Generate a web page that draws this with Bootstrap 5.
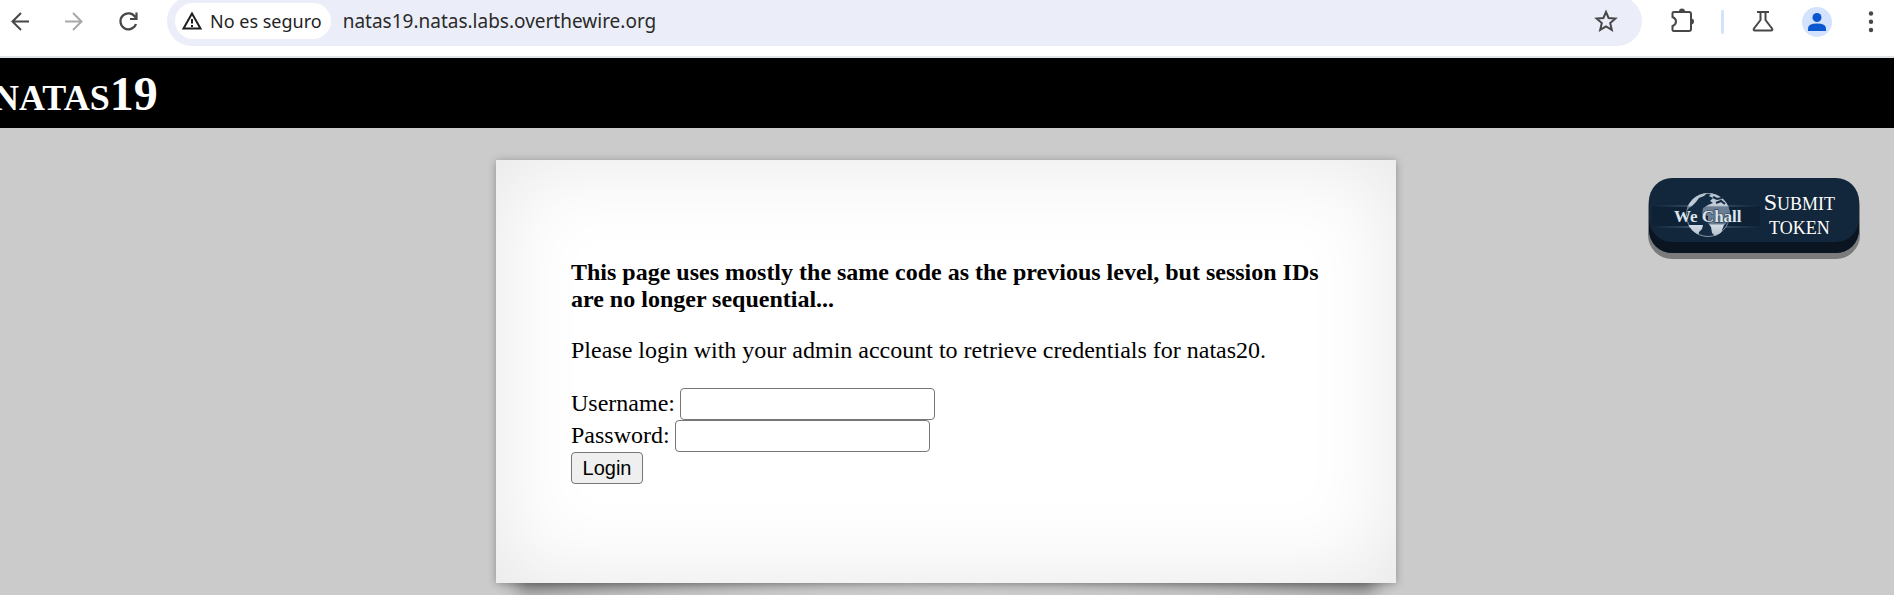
<!DOCTYPE html>
<html lang="es">
<head>
<meta charset="utf-8">
<meta name="viewport" content="width=device-width, initial-scale=1">
<title>natas19</title>
<link href="https://cdn.jsdelivr.net/npm/bootstrap@5.3.0/dist/css/bootstrap.min.css" rel="stylesheet">
<style>
body { background: #cbcbcb; color: #000; font-family: "Liberation Serif", "Times New Roman", serif; font-size: 24px; line-height: 27px; }
.toolbar { height: 58px; padding: 0 11px 12px 8px; border-bottom: 2px solid #dfe3e6; color: #1f1f1f; line-height: 24px; }
.tool { width: 24px; height: 30px; padding: 0; border: 0; background: none; color: #474747; }
.tool svg, .site-chip svg { display: block; }
.nav-tools { width: 159px; gap: 30px; }
.browser-tools { gap: 27px; }
.omnibox { height: 50px; margin-top: -2px; padding: 0 24px 0 8px; border-radius: 25px; background: #ebeef8; }
.site-chip { height: 36px; padding: 0 9px 0 6px; gap: 7px; border: 0; border-radius: 18px; background: #fff; color: #1f1f1f; font-family: "Noto Sans", sans-serif; font-size: 18px; }
.address { margin-left: 12px; padding: 0; border: 0; outline: 0; min-width: 0; background: none; color: #2a2a2a; font-family: "Noto Sans", sans-serif; font-size: 19px; }
.divider { width: 3px; height: 24px; background: #d3e3fd; border-radius: 1px; }
.puzzle { width: 28px; }
.avatar { width: 30px; border-radius: 50%; background: #d3e3fd; color: #0b57d0; }
.level-bar { height: 70px; background: #000; overflow: hidden; }
.level-bar h1 { margin: 0 0 0 -7px; color: #fff; font-size: 48px; line-height: 70px; font-weight: 700; font-variant: small-caps; }
.level-bar span { font-size: 51px; }
.stage { display: grid; grid-template-columns: 1fr minmax(0, 900px) 1fr; align-items: start; padding: 32px 2px 0 0; }
.sheet { position: relative; grid-column: 2; padding: 99px 75px; background: #fff; box-shadow: 0 1px 8px rgba(0,0,0,.3), 0 0 90px rgba(0,0,0,.1) inset; }
.sheet::before, .sheet::after { content: ""; position: absolute; z-index: -1; bottom: 22px; width: 50%; height: 60px; box-shadow: 0 20px 18px rgba(0,0,0,.4); }
.sheet::before { left: 18px; transform: rotate(-3deg); }
.sheet::after { right: 18px; transform: rotate(3deg); }
.sheet p { margin-bottom: 24px; }
.field { height: 32px; gap: 5px; }
.field label { line-height: 24px; padding-bottom: 2px; }
.field input { width: 255px; height: 32px; border: 1px solid #767676; border-radius: 4px; background: #fff; font-size: 20px; padding: 2px 4px; }
.login { width: 72px; height: 32px; padding: 0; border: 1px solid #767676; border-radius: 4px; background: #efefef; color: #000; font: 20px/28px "Liberation Sans", Arial, sans-serif; }
.token { grid-column: 3; justify-self: end; width: 210px; height: 75px; margin: 18px 33px 0 0; padding: 0 24px 4px 3px; border-radius: 23px; background: #12273b; box-shadow: inset 0 -11px 0 #0a1521, 0 5px 0 1px #7b7b7b; color: #fff; font-size: 24px; line-height: 23px; font-variant: small-caps; text-decoration: none; }
.token:hover { color: #fff; }
.token span { font-size: 26px; }
.wordmark { font: 700 17px "Liberation Serif", serif; font-variant: normal; }
</style>
</head>
<body class="min-vh-100">
<header class="toolbar d-flex align-items-center bg-white">
  <nav class="nav-tools d-flex flex-shrink-0" aria-label="Navegación">
    <button class="tool" aria-label="Atrás"><svg width="24" height="30" viewBox="0 -3 24 30" fill="none" stroke="currentColor" stroke-width="2"><path d="M21 11.500H4.500M13 3L4.500 11.500l8.500 8.500"/></svg></button>
    <button class="tool" aria-label="Adelante" disabled><svg width="24" height="30" viewBox="0 -3 24 30" fill="none" stroke="#a9a9a9" stroke-width="2"><path d="M3 11.500h16.500M11 3l8.500 8.500L11 20"/></svg></button>
    <button class="tool" aria-label="Recargar"><svg width="24" height="30" viewBox="0 -3 24 30" fill="none" stroke="currentColor" stroke-width="2.200"><path d="M19.500 7.500A8 8 0 1 0 20 14M20.500 2.500V9H14"/></svg></button>
  </nav>
  <div class="omnibox d-flex align-items-center flex-grow-1">
    <button class="site-chip d-flex align-items-center flex-shrink-0"><svg width="22" height="20" viewBox="0 0 22 20" fill="none" stroke="currentColor" stroke-width="2"><path d="M11 2.500L2.500 17.500h17z"/><path d="M11 8v4.500M11 14v2"/></svg>No es seguro</button>
    <input class="address flex-grow-1" aria-label="Dirección" value="natas19.natas.labs.overthewire.org">
    <button class="tool" aria-label="Favorito"><svg width="24" height="30" viewBox="0 0 24 30" fill="none" stroke="currentColor" stroke-width="2"><path d="M12 6l2.600 6 6.800.6-5.200 4.500 1.600 6.700-5.800-3.500-5.800 3.500 1.600-6.700-5.200-4.500 6.800-.6z"/></svg></button>
  </div>
  <div class="browser-tools d-flex align-items-center flex-shrink-0 ms-4">
    <button class="tool puzzle" aria-label="Extensiones"><svg width="28" height="30" viewBox="0 0 28 30" fill="none" stroke="currentColor" stroke-width="2"><path d="M8 5h15q2 0 2 2v15q0 2-2 2H8q-1.500 0-1.500-1.500V19q3.500-1.500 3.500-4.500t-3.500-4.500V6.500Q6.500 5 8 5z"/><path d="M13 4.500a3 3 0 0 1 6 0zM25 11.500a3 3 0 0 1 0 6z" fill="currentColor" stroke="none"/></svg></button>
    <span class="divider"></span>
    <button class="tool" aria-label="Experimentos"><svg width="24" height="30" viewBox="0 0 24 30" fill="none" stroke="currentColor" stroke-width="2"><path d="M6 5h12M9.500 5v8L3 21.500q-1 2 1 2h16q2 0 1-2L14.500 13V5"/></svg></button>
    <button class="tool avatar" aria-label="Perfil"><svg width="30" height="30" viewBox="0 0 30 30" fill="currentColor"><circle cx="15" cy="10.500" r="4.500"/><path d="M6 24v-2.500q0-5 9-5t9 5V24z"/></svg></button>
    <button class="tool" aria-label="Menú"><svg width="24" height="30" viewBox="0 0 24 30" fill="currentColor"><circle cx="12" cy="6.500" r="2.200"/><circle cx="12" cy="14.700" r="2.200"/><circle cx="12" cy="23" r="2.200"/></svg></button>
  </div>
</header>
<div class="level-bar"><h1><span>natas</span>19</h1></div>
<main class="stage position-relative z-0">
  <section class="sheet">
    <p class="fw-bold">This page uses mostly the same code as the previous level, but session IDs are no longer sequential...</p>
    <p>Please login with your admin account to retrieve credentials for natas20.</p>
    <form>
      <div class="field d-flex align-items-center"><label for="username">Username:</label><input id="username" type="text"></div>
      <div class="field d-flex align-items-center"><label for="password">Password:</label><input id="password" type="password"></div>
      <button class="login d-block" type="button">Login</button>
    </form>
  </section>
  <a href="#" class="token d-flex align-items-center justify-content-between">
    <svg class="flex-shrink-0" width="108" height="50" viewBox="0 0 108 50">
      <defs>
        <linearGradient id="streak"><stop offset="0" stop-color="#6f8ba8" stop-opacity="0"/><stop offset=".5" stop-color="#9fb6cc"/><stop offset="1" stop-color="#6f8ba8" stop-opacity="0"/></linearGradient>
        <linearGradient id="land" gradientUnits="userSpaceOnUse" x1="0" y1="4" x2="0" y2="48"><stop offset="0" stop-color="#b3c1cf"/><stop offset=".28" stop-color="#c3cfda"/><stop offset=".32" stop-color="#6a7d92"/><stop offset=".7" stop-color="#6a7d92"/><stop offset=".73" stop-color="#d3dce4"/><stop offset="1" stop-color="#aebccb"/></linearGradient>
        <clipPath id="globe"><circle cx="56" cy="26" r="22"/></clipPath>
      </defs>
      <rect y="17" width="108" height="20" fill="#0c1d30" opacity=".5"/>
      <rect y="16" width="108" height="2" fill="url(#streak)" opacity=".4"/>
      <rect y="37" width="108" height="2" fill="url(#streak)" opacity=".4"/>
      <circle cx="56" cy="26" r="21.500" fill="#132b43" stroke="#8194a8"/>
      <g clip-path="url(#globe)" fill="url(#land)">
        <path d="M40 4h15l-3 3-5 2-3 4-4 4-4 3-4 1z"/>
        <path d="M57 4h23v26l-8 6-3 8-5 4-4-4-1-6-3-4v-7l-6-2 1-6 5-3 5-2-3-2 3-3-4-2 2-2z"/>
        <path d="M34 36h17l-1 4-3 3-1 5-9-4z"/>
      </g>
      <path d="M61 8l4 2 5-1M64 14l5-2 4 3" fill="none" stroke="#132b43" stroke-width="2"/>
      <text class="wordmark" x="22" y="33" fill="#dde4eb" stroke="#132b43" stroke-width="1" paint-order="stroke">We Chall</text>
    </svg>
    <div class="text-center">S<span>ubmit</span><br><span>token</span></div>
  </a>
</main>
<script src="https://cdn.jsdelivr.net/npm/bootstrap@5.3.0/dist/js/bootstrap.bundle.min.js"></script>
</body>
</html>
